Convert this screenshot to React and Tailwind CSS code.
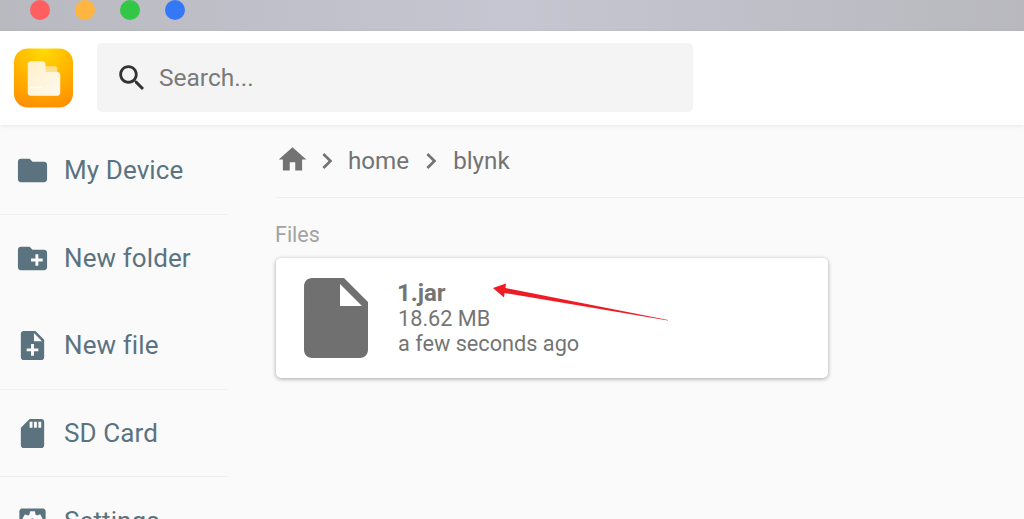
const paths = {
  folder: "M10 4H4c-1.1 0-1.99.9-1.99 2L2 18c0 1.1.9 2 2 2h16c1.1 0 2-.9 2-2V8c0-1.1-.9-2-2-2h-8l-2-2z",
  newFolder: "M20 6h-8l-2-2H4c-1.11 0-1.99.89-1.99 2L2 18c0 1.11.89 2 2 2h16c1.11 0 2-.89 2-2V8c0-1.11-.89-2-2-2zm-1 8h-3v3h-2v-3h-3v-2h3V9h2v3h3v2z",
  noteAdd: "M14 2H6c-1.1 0-1.99.9-1.99 2L4 20c0 1.1.89 2 1.99 2H18c1.1 0 2-.9 2-2V8l-6-6zm2 14h-3v3h-2v-3H8v-2h3v-3h2v3h3v2zm-3-7V3.5L18.5 9H13z",
  sd: "M18 2h-8L4.02 8 4 20c0 1.1.9 2 2 2h12c1.1 0 2-.9 2-2V4c0-1.1-.9-2-2-2zm-6 6h-2V4h2v4zm3 0h-2V4h2v4zm3 0h-2V4h2v4z",
  settings: "M12 10c-1.1 0-2 .9-2 2s.9 2 2 2 2-.9 2-2-.9-2-2-2zm7-7H5c-1.11 0-2 .9-2 2v14c0 1.1.89 2 2 2h14c1.11 0 2-.9 2-2V5c0-1.1-.89-2-2-2zm-1.75 9c0 .23-.02.46-.05.68l1.48 1.16c.13.11.17.3.08.45l-1.4 2.42c-.09.15-.27.21-.43.15l-1.74-.7c-.36.28-.76.51-1.18.69l-.26 1.85c-.03.17-.18.3-.35.3h-2.8c-.17 0-.32-.13-.35-.29l-.26-1.85c-.43-.18-.82-.41-1.18-.69l-1.74.7c-.16.06-.34 0-.43-.15l-1.4-2.42c-.09-.15-.05-.34.08-.45l1.48-1.16c-.03-.23-.05-.46-.05-.69 0-.23.02-.46.05-.68l-1.48-1.16c-.13-.11-.17-.3-.08-.45l1.4-2.42c.09-.15.27-.21.43-.15l1.74.7c.36-.28.76-.51 1.18-.69l.26-1.85c.03-.17.18-.3.35-.3h2.8c.17 0 .32.13.35.29l.26 1.85c.43.18.82.41 1.18.69l1.74-.7c.16-.06.34 0 .43.15l1.4 2.42c.09.15.05.34-.08.45l-1.48 1.16c.03.23.05.46.05.69z",
  file: "M6 2c-1.1 0-1.99.9-1.99 2L4 20c0 1.1.89 2 1.99 2H18c1.1 0 2-.9 2-2V8l-6-6H6zm7 7V3.5L18.5 9H13z",
  home: "M10 20v-6h4v6h5v-8h3L12 3 2 12h3v8z",
  chevron: "M10 6L8.59 7.41 13.17 12l-4.58 4.59L10 18l6-6z",
  search: "M15.5 14h-.79l-.28-.27C15.41 12.59 16 11.11 16 9.5 16 5.91 13.09 3 9.5 3S3 5.91 3 9.5 5.91 16 9.5 16c1.61 0 3.09-.59 4.23-1.57l.27.28v.79l5 4.99L20.49 19l-4.99-5zm-6 0C7.01 14 5 11.99 5 9.5S7.01 5 9.5 5 14 7.01 14 9.5 11.99 14 9.5 14z",
};

function Icon({ d, className }) {
  return (
    <svg viewBox="0 0 24 24" fill="currentColor" className={className}>
      <path d={d} />
    </svg>
  );
}

function NavItem({ d, label, divider }) {
  return (
    <div className={`h-[87.6px] shrink-0 flex items-center pl-[15px] gap-[14px] text-[#5a737f] ${divider ? "border-b border-[#f0f0f0]" : ""}`}>
      <Icon d={d} className="w-[35px] h-[35px] shrink-0" />
      <span className="text-[26px] leading-none tracking-[0.1px]">{label}</span>
    </div>
  );
}

export default function App() {
  return (
    <div className="relative w-[1024px] h-[519px] overflow-hidden bg-[#fafafa] flex flex-col font-['Roboto',sans-serif]">
      <div className="h-[31px] shrink-0 flex gap-[25px] pl-[30px] bg-gradient-to-r from-[#b9b9c0] via-[#c6c6d2] to-[#b8b8be] items-start">
        <span className="w-5 h-5 rounded-full bg-[#ff5f5f]" />
        <span className="w-5 h-5 rounded-full bg-[#ffb53f]" />
        <span className="w-5 h-5 rounded-full bg-[#33c748]" />
        <span className="w-5 h-5 rounded-full bg-[#3478f6]" />
      </div>

      <header className="relative z-10 h-[94px] shrink-0 bg-white flex items-center pl-[14px] gap-6 shadow-[0_1px_4px_rgba(0,0,0,0.08)]">
        <svg viewBox="0 0 60 60" className="w-[59px] h-[60px] shrink-0">
          <defs>
            <radialGradient id="lg" cx="0.5" cy="0" r="1">
              <stop offset="0" stopColor="#ffdc00" />
              <stop offset="1" stopColor="#ff9200" />
            </radialGradient>
            <linearGradient id="fg" x1="0" y1="0" x2="1" y2="1">
              <stop offset="0" stopColor="#fff0c8" />
              <stop offset="1" stopColor="#fffaf0" />
            </linearGradient>
          </defs>
          <rect width="60" height="60" rx="14" fill="url(#lg)" />
          <rect x="30" y="18" width="14" height="14" rx="2" fill="#ffdf8a" />
          <path d="M14 16c0-1.5 1-3 3-3h12c2 0 3 1.500 3 3v8h12c1.500 0 3 1 3 3v18c0 2-1.500 3-3 3H17c-2 0-3-1-3-3z" fill="url(#fg)" />
          <rect x="16" y="39" width="12" height="1.200" fill="#ffffff" />
        </svg>
        <div className="w-[596px] h-[69px] mb-[1px] bg-[#f4f4f4] rounded-[5px] flex items-center pl-[18px] gap-[10px]">
          <Icon d={paths.search} className="w-[34px] h-[34px] text-[#333333]" />
          <span className="text-[24.5px] leading-none text-[#7a7a7a] mt-[1px]">Search...</span>
        </div>
      </header>

      <div className="flex flex-1 min-h-0">
        <nav className="w-[228px] shrink-0 flex flex-col pt-[2px]">
          <NavItem d={paths.folder} label="My Device" divider />
          <NavItem d={paths.newFolder} label="New folder" />
          <NavItem d={paths.noteAdd} label="New file" divider />
          <NavItem d={paths.sd} label="SD Card" divider />
          <NavItem d={paths.settings} label="Settings" />
        </nav>

        <main className="flex-1 pl-[48px] flex flex-col">
          <div className="h-[73px] shrink-0 flex items-center border-b border-[#eeeeee] text-[#737373]">
            <Icon d={paths.home} className="w-[33px] h-[33px] -mt-[3px]" />
            <Icon d={paths.chevron} className="w-8 h-8 ml-[2px] -mt-[1px]" />
            <span className="text-[24.2px] leading-none ml-[5px]">home</span>
            <Icon d={paths.chevron} className="w-8 h-8 ml-[6px] -mt-[1px]" />
            <span className="text-[24.2px] leading-none ml-[6px]">blynk</span>
          </div>
          <div className="mt-[25px] -ml-[1px] text-[21.5px] leading-[24px] text-[#a3a3a3]">Files</div>
          <div className="mt-[11px] w-[552px] h-[120px] bg-white rounded-[5px] shadow-[0_1px_4px_rgba(0,0,0,0.35)] flex items-center pl-3 gap-[14px] text-[#757575]">
            <Icon d={paths.file} className="w-24 h-24 shrink-0 text-[#707070]" />
            <div className="flex flex-col">
              <span className="text-[24px] leading-[26px] font-bold -ml-[1px]">1.jar</span>
              <span className="text-[21.7px] leading-[25px]">18.62 MB</span>
              <span className="text-[21.7px] leading-[25px]">a few seconds ago</span>
            </div>
          </div>
        </main>
      </div>

      <svg className="absolute left-[488px] top-[280px] w-[185px] h-[45px]" viewBox="0 0 185 45">
        <path d="M5 8 L18 3.500 L17.500 8 L180 40 L180 40.500 L16.500 13 L16 17.500 Z" fill="#ee1c25" />
      </svg>
    </div>
  );
}
